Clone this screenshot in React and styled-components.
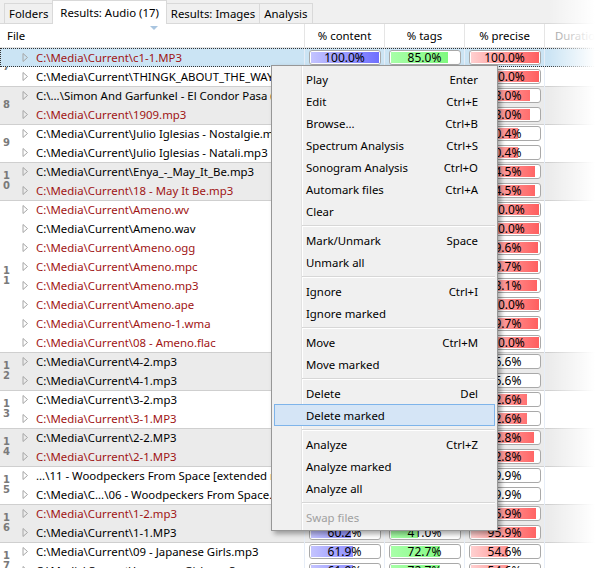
import React from "react";
import styled, { createGlobalStyle, css } from "styled-components";

const GlobalStyle = createGlobalStyle`
  html, body {
    margin: 0;
    padding: 0;
    background: #ffffff;
  }
  body {
    font-family: "Noto Sans", "Open Sans", sans-serif;
    font-size: 11.4px;
    color: #000;
  }
`;

const Window = styled.div`
  position: relative;
  width: 600px;
  height: 568px;
  overflow: hidden;
  background: #ffffff;
`;

const TabBar = styled.div`
  height: 24px;
  box-sizing: border-box;
  display: flex;
  align-items: flex-end;
  padding-left: 4px;
  background: #f0f0f0;
  border-bottom: 1px solid #d9d9d9;
`;

const Tab = styled.div`
  box-sizing: border-box;
  height: ${(p) => (p.active ? "24px" : "20px")};
  margin-bottom: ${(p) => (p.active ? "-1px" : "0")};
  padding: 0 ${(p) => (p.active ? "7px" : "4px")};
  display: flex;
  align-items: center;
  border: 1px solid #d9d9d9;
  border-bottom: none;
  margin-left: -1px;
  background: ${(p) => (p.active ? "#ffffff" : "#f0f0f0")};
  white-space: nowrap;
  position: relative;
  z-index: ${(p) => (p.active ? 1 : 0)};
`;

const Header = styled.div`
  height: 24px;
  box-sizing: border-box;
  display: flex;
  border-bottom: 1px solid #e5e5e5;
`;

const HeadCell = styled.div`
  position: relative;
  box-sizing: border-box;
  width: ${(p) => p.w}px;
  flex: ${(p) => (p.w ? "none" : "1")};
  display: flex;
  align-items: center;
  justify-content: ${(p) => (p.left ? "flex-start" : "center")};
  padding-left: ${(p) => (p.left ? "7px" : "0")};
  border-right: 1px solid #e5e5e5;
  color: ${(p) => (p.dim ? "#9a9a9a" : "#000")};
  white-space: nowrap;
  overflow: hidden;
`;

const SortArrow = styled.div`
  position: absolute;
  top: 2px;
  left: 150px;
  width: 0;
  height: 0;
  border-left: 4px solid transparent;
  border-right: 4px solid transparent;
  border-top: 4px solid #a9c5e0;
`;

const List = styled.div`
  display: flex;
  flex-direction: column;
  box-shadow: inset 1px 0 0 #c8c8c8;
`;

const Group = styled.div`
  display: flex;
  background: ${(p) => (p.shade ? "#ebebeb" : "#ffffff")};
  box-shadow: inset 0 1px 0 #cfcfcf;
`;

const GroupNo = styled.div`
  width: 20px;
  flex: none;
  display: flex;
  flex-direction: column;
  justify-content: center;
  padding-left: 3px;
  box-sizing: border-box;
  font-family: "DejaVu Sans", sans-serif;
  font-weight: bold;
  font-size: 10px;
  line-height: 10px;
  color: #7a7a7a;
`;

const Rows = styled.div`
  flex: 1;
  display: flex;
  flex-direction: column;
`;

const Row = styled.div`
  height: 19px;
  display: flex;
  align-items: center;
  box-sizing: border-box;
  ${(p) =>
    p.selected &&
    css`
      background: #cbe4f4;
      outline: 1px dotted #333;
      outline-offset: -1px;
      margin-left: -20px;
      padding-left: 20px;
    `}
`;

const FileCell = styled.div`
  width: 285px;
  height: 100%;
  flex: none;
  display: flex;
  align-items: center;
  box-sizing: border-box;
  border-right: 1px solid #e6edf7;
  color: ${(p) => (p.red ? "#a01414" : "#000")};
  white-space: nowrap;
  overflow: hidden;
`;

const Expander = styled.svg`
  width: 7px;
  height: 9px;
  margin-left: 2px;
  margin-right: 7px;
  flex: none;
`;

const BarCell = styled.div`
  width: 80px;
  height: 100%;
  flex: none;
  display: flex;
  align-items: center;
  justify-content: center;
  box-sizing: border-box;
  border-right: 1px solid #e6edf7;
`;

const palettes = {
  blue: "linear-gradient(to right, #c4c4ff, #6f6fff)",
  green: "linear-gradient(to right, #a8ffa8, #78f878)",
  red: "linear-gradient(to right, #ffd0d0, #ff5e5e)",
};

const BarBox = styled.div`
  position: relative;
  width: 72px;
  height: 15px;
  box-sizing: border-box;
  border: 1px solid #a9a9a9;
  border-radius: 3px;
  background: #ffffff;
  overflow: hidden;
  display: flex;
  align-items: center;
  justify-content: center;
  line-height: 13px;
  font-size: 12px;
`;

const BarFill = styled.div`
  position: absolute;
  left: 1px;
  top: 1px;
  bottom: 1px;
  background: ${(p) => palettes[p.kind]};
  background-size: 68px 100%;
  background-repeat: no-repeat;
`;

const BarText = styled.span`
  position: relative;
`;

const Menu = styled.div`
  position: absolute;
  left: 271px;
  top: 65px;
  width: 227px;
  box-sizing: border-box;
  padding: 2px;
  background-color: #f0f0f0;
  background-image: linear-gradient(
    to right,
    transparent 29px,
    #e2e2e2 29px,
    #e2e2e2 30px,
    #ffffff 30px,
    #ffffff 31px,
    transparent 31px
  );
  background-repeat: no-repeat;
  border: 1px solid #979797;
  box-shadow: 3px 3px 5px rgba(0, 0, 0, 0.35);
`;

const MenuItem = styled.div`
  height: 22px;
  box-sizing: border-box;
  display: flex;
  align-items: center;
  justify-content: space-between;
  padding: 0 16px 0 31px;
  color: ${(p) => (p.disabled ? "#a0a0a0" : "#000")};
  border: 1px solid transparent;
  ${(p) =>
    p.hot &&
    css`
      background: #d5e5f6;
      border-color: #7eb4ea;
    `}
`;

const MenuSep = styled.div`
  height: 7px;
  display: flex;
  align-items: center;
  padding-left: 28px;

  &::after {
    content: "";
    flex: 1;
    height: 1px;
    background: #d7d7d7;
    box-shadow: 0 1px 0 #ffffff;
  }
`;

const Fade = styled.div`
  position: absolute;
  top: 0;
  right: 0;
  width: 52px;
  height: 100%;
  pointer-events: none;
  background: linear-gradient(to right, rgba(255, 255, 255, 0), #ffffff 90%);
`;

const groups = [
  {
    no: "7",
    rows: [
      ["C:\\Media\\Current\\c1-1.MP3", true, 100.0, 85.0, 100.0, true],
      ["C:\\Media\\Current\\THINGK_ABOUT_THE_WAY.mp3", false, 100.0, 85.0, 100.0],
    ],
  },
  {
    no: "8",
    rows: [
      ["C:\\...\\Simon And Garfunkel - El Condor Pasa (If I Could).mp3", false, 88.4, 52.3, 88.0],
      ["C:\\Media\\Current\\1909.mp3", true, 88.4, 52.3, 88.0],
    ],
  },
  {
    no: "9",
    rows: [
      ["C:\\Media\\Current\\Julio Iglesias - Nostalgie.mp3", false, 72.1, 64.0, 70.4],
      ["C:\\Media\\Current\\Julio Iglesias - Natali.mp3", false, 72.1, 64.0, 70.4],
    ],
  },
  {
    no: "10",
    rows: [
      ["C:\\Media\\Current\\Enya_-_May_It_Be.mp3", false, 93.2, 70.5, 94.5],
      ["C:\\Media\\Current\\18 - May It Be.mp3", true, 93.2, 70.5, 94.5],
    ],
  },
  {
    no: "11",
    rows: [
      ["C:\\Media\\Current\\Ameno.wv", true, 100.0, 90.0, 100.0],
      ["C:\\Media\\Current\\Ameno.wav", false, 100.0, 90.0, 100.0],
      ["C:\\Media\\Current\\Ameno.ogg", true, 99.1, 90.0, 99.6],
      ["C:\\Media\\Current\\Ameno.mpc", true, 99.3, 90.0, 99.7],
      ["C:\\Media\\Current\\Ameno.mp3", true, 97.5, 90.0, 98.1],
      ["C:\\Media\\Current\\Ameno.ape", true, 100.0, 90.0, 100.0],
      ["C:\\Media\\Current\\Ameno-1.wma", true, 99.2, 90.0, 99.7],
      ["C:\\Media\\Current\\08 - Ameno.flac", true, 100.0, 90.0, 100.0],
    ],
  },
  {
    no: "12",
    rows: [
      ["C:\\Media\\Current\\4-2.mp3", false, 40.2, 60.0, 36.6],
      ["C:\\Media\\Current\\4-1.mp3", false, 40.2, 60.0, 36.6],
    ],
  },
  {
    no: "13",
    rows: [
      ["C:\\Media\\Current\\3-2.mp3", false, 80.3, 60.0, 82.6],
      ["C:\\Media\\Current\\3-1.MP3", true, 80.3, 60.0, 82.6],
    ],
  },
  {
    no: "14",
    rows: [
      ["C:\\Media\\Current\\2-2.MP3", false, 90.1, 60.0, 92.8],
      ["C:\\Media\\Current\\2-1.MP3", true, 90.1, 60.0, 92.8],
    ],
  },
  {
    no: "15",
    rows: [
      ["...\\11 - Woodpeckers From Space [extended mix].mp3", false, 35.4, 80.0, 29.9],
      ["C:\\Media\\C...\\06 - Woodpeckers From Space.mp3", false, 35.4, 80.0, 29.9],
    ],
  },
  {
    no: "16",
    rows: [
      ["C:\\Media\\Current\\1-2.mp3", true, 60.2, 41.0, 95.9],
      ["C:\\Media\\Current\\1-1.MP3", false, 60.2, 41.0, 95.9],
    ],
  },
  {
    no: "17",
    rows: [
      ["C:\\Media\\Current\\09 - Japanese Girls.mp3", false, 61.9, 72.7, 54.6],
      ["C:\\Media\\Current\\Japanese Girls.mp3", false, 61.9, 72.7, 54.6],
    ],
  },
];

const menu = [
  ["Play", "Enter"],
  ["Edit", "Ctrl+E"],
  ["Browse...", "Ctrl+B"],
  ["Spectrum Analysis", "Ctrl+S"],
  ["Sonogram Analysis", "Ctrl+O"],
  ["Automark files", "Ctrl+A"],
  ["Clear"],
  "-",
  ["Mark/Unmark", "Space"],
  ["Unmark all"],
  "-",
  ["Ignore", "Ctrl+I"],
  ["Ignore marked"],
  "-",
  ["Move", "Ctrl+M"],
  ["Move marked"],
  "-",
  ["Delete", "Del"],
  ["Delete marked", null, "hot"],
  "-",
  ["Analyze", "Ctrl+Z"],
  ["Analyze marked"],
  ["Analyze all"],
  "-",
  ["Swap files", null, "disabled"],
];

const Bar = ({ value, kind }) => (
  <BarBox>
    <BarFill kind={kind} style={{ width: `${(value / 100) * 68}px` }} />
    <BarText>{value.toFixed(1)}%</BarText>
  </BarBox>
);

const App = () => {
  return (
    <Window>
      <GlobalStyle />
      <TabBar>
        <Tab style={{ marginLeft: 0 }}>Folders</Tab>
        <Tab active>Results: Audio (17)</Tab>
        <Tab>Results: Images</Tab>
        <Tab>Analysis</Tab>
      </TabBar>
      <Header>
        <HeadCell w={305} left>
          File
          <SortArrow />
        </HeadCell>
        <HeadCell w={80}>% content</HeadCell>
        <HeadCell w={80}>% tags</HeadCell>
        <HeadCell w={80}>% precise</HeadCell>
        <HeadCell left dim style={{ borderRight: "none", paddingLeft: 10 }}>
          Duration
        </HeadCell>
      </Header>
      <List>
        {groups.map((g, gi) => (
          <Group key={g.no} shade={gi % 2 === 1}>
            <GroupNo>
              {g.no.split("").map((d, i) => (
                <span key={i}>{d}</span>
              ))}
            </GroupNo>
            <Rows>
              {g.rows.map((r) => (
                <Row key={r[0]} selected={r[5]}>
                  <FileCell red={r[1]}>
                    <Expander viewBox="0 0 7 9">
                      <path d="M1 0.5 L5.5 4.5 L1 8.5 Z" fill="none" stroke="#a6a6a6" strokeWidth="1" />
                    </Expander>
                    {r[0]}
                  </FileCell>
                  <BarCell>
                    <Bar value={r[2]} kind="blue" />
                  </BarCell>
                  <BarCell>
                    <Bar value={r[3]} kind="green" />
                  </BarCell>
                  <BarCell>
                    <Bar value={r[4]} kind="red" />
                  </BarCell>
                </Row>
              ))}
            </Rows>
          </Group>
        ))}
      </List>
      <Menu>
        {menu.map((m, i) =>
          m === "-" ? (
            <MenuSep key={i} />
          ) : (
            <MenuItem key={i} hot={m[2] === "hot"} disabled={m[2] === "disabled"}>
              <span>{m[0]}</span>
              {m[1] && <span>{m[1]}</span>}
            </MenuItem>
          )
        )}
      </Menu>
      <Fade />
    </Window>
  );
};

export default App;
